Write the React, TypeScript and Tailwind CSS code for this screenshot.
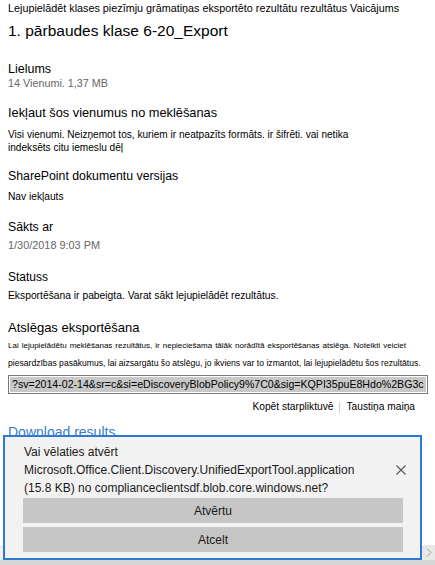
import React from "react";

const font = "font-['Liberation_Sans',Arial,sans-serif]";

function CloseIcon() {
  return (
    <svg width="10" height="10" viewBox="0 0 10 10" className="block">
      <path d="M0.5 0.5 L9.5 9.5 M9.5 0.5 L0.5 9.5" stroke="#555" strokeWidth="1.1" fill="none" />
    </svg>
  );
}

function Chevron() {
  return (
    <svg width="6" height="9" viewBox="0 0 6 9" className="block">
      <path d="M1 0.5 L5 4.5 L1 8.5" stroke="#a0a0a0" strokeWidth="1" fill="none" />
    </svg>
  );
}

export default function App() {
  return (
    <div className={`${font} relative w-[435px] h-[565px] overflow-hidden bg-white text-black`}>
      <div className="flex flex-col h-[565px]">
        {/* export details */}
        <div className="h-[545px] overflow-hidden px-[8px]">
          <div className="h-[16px] leading-[16px] text-[10.8px] whitespace-nowrap">
            Lejupielādēt klases piezīmju grāmatiņas eksportēto rezultātu rezultātus Vaicājums
          </div>
          <div className="mt-[4px] h-[22px] leading-[22px] text-[15.5px] whitespace-nowrap">
            1. pārbaudes klase 6-20_Export
          </div>

          <div className="mt-[20px] h-[14px] leading-[14px] text-[12.5px]">Lielums</div>
          <div className="h-[14px] leading-[14px] text-[10.8px] text-[#666]">14 Vienumi. 1,37 MB</div>

          <div className="mt-[15px] h-[16px] leading-[16px] text-[12.8px]">Iekļaut šos vienumus no meklēšanas</div>
          <div className="mt-[7px] leading-[13px] text-[10.1px] whitespace-nowrap">
            <div>Visi vienumi. Neizņemot tos, kuriem ir neatpazīts formāts. ir šifrēti. vai netika</div>
            <div>indeksēts citu iemeslu dēļ</div>
          </div>

          <div className="mt-[14px] h-[16px] leading-[16px] text-[12.3px]">SharePoint dokumentu versijas</div>
          <div className="mt-[6px] h-[14px] leading-[14px] text-[10.2px]">Nav iekļauts</div>

          <div className="mt-[15px] h-[16px] leading-[16px] text-[12.3px]">Sākts ar</div>
          <div className="mt-[3px] h-[14px] leading-[14px] text-[10.9px] text-[#666]">1/30/2018 9:03 PM</div>

          <div className="mt-[17px] h-[16px] leading-[16px] text-[12px]">Statuss</div>
          <div className="mt-[4px] h-[14px] leading-[14px] text-[10.3px] whitespace-nowrap">
            Eksportēšana ir pabeigta. Varat sākt lejupielādēt rezultātus.
          </div>

          <div className="mt-[17px] h-[16px] leading-[16px] text-[13px]">Atslēgas eksportēšana</div>
          <div className="mt-[4px] h-[12px] leading-[12px] text-[8px] whitespace-nowrap [word-spacing:0.8px]">
            Lai lejupielādētu meklēšanas rezultātus, ir nepieciešama tālāk norādītā eksportēšanas atslēga. Noteikti veiciet
          </div>
          <div className="mt-[5px] h-[12px] leading-[12px] text-[8.6px] whitespace-nowrap">
            piesardzības pasākumus, lai aizsargātu šo atslēgu, jo ikviens var to izmantot, lai lejupielādētu šos rezultātus.
          </div>

          <div className="mt-[6px] h-[19px] w-[420px] border border-[#7a7a7a] bg-white p-[1px] overflow-hidden">
            <div className="h-full bg-[#c8c8c8] pl-[2px] leading-[15px] text-[10.6px] whitespace-nowrap overflow-hidden">
              ?sv=2014-02-14&amp;sr=c&amp;si=eDiscoveryBlobPolicy9%7C0&amp;sig=KQPI35puE8Hdo%2BG3c
            </div>
          </div>

          <div className="mt-[6px] h-[14px] flex items-center justify-end pr-[12px] text-[10.2px] leading-[14px]">
            <span>Kopēt starpliktuvē</span>
            <span className="mx-[6px] h-[11px] w-px bg-[#d0d0d0]" />
            <span>Taustiņa maiņa</span>
          </div>

          <div className="mt-[9px] h-[18px] leading-[18px] text-[14px] text-[#3b7cc9]">Download results</div>
        </div>

        {/* horizontal scrollbar */}
        <div className="h-[15px] flex bg-[#f0f0f0]">
          <div className="flex-1" />
          <div className="w-[13px] flex items-center justify-center bg-[#e8e8e8]">
            <Chevron />
          </div>
        </div>
        <div className="h-[5px] bg-[#d6d6d6]" />
      </div>

      {/* download prompt bar */}
      <div className="absolute left-[3px] top-[435px] w-[419px] h-[125px] border-2 border-[#2a7ad3] bg-[#f2f2f2]">
        <div className="flex pl-[19px] pt-[6px] pr-[14px]">
          <div className="flex-1 text-[12px] leading-[18px] text-[#1a1a1a] whitespace-nowrap">
            <div>Vai vēlaties atvērt</div>
            <div>Microsoft.Office.Client.Discovery.UnifiedExportTool.application</div>
            <div>(15.8 KB) no complianceclientsdf.blob.core.windows.net?</div>
          </div>
          <div className="pt-[22px]">
            <CloseIcon />
          </div>
        </div>
        <div className="mt-[1px] ml-[18px] w-[380px] flex flex-col gap-[4px]">
          <div className="h-[25px] bg-[#c6c6c6] flex items-center justify-center text-[12px] text-[#1a1a1a]">Atvērtu</div>
          <div className="h-[25px] bg-[#c6c6c6] flex items-center justify-center text-[12px] text-[#1a1a1a]">Atcelt</div>
        </div>
      </div>
    </div>
  );
}
